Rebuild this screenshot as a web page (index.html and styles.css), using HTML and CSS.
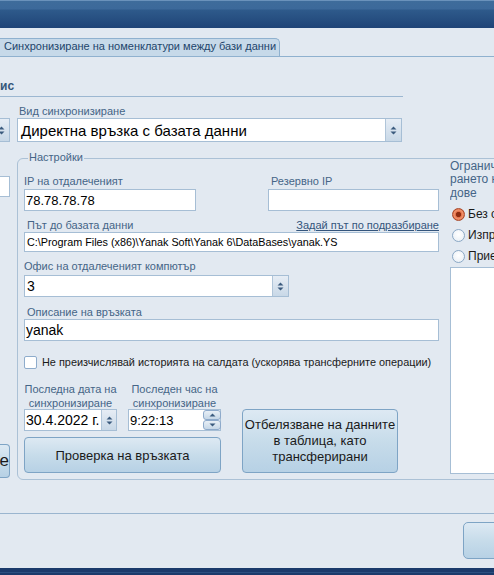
FILE: index.html
```html
<!DOCTYPE html>
<html lang="bg">
<head>
<meta charset="utf-8">
<title>Синхронизиране на номенклатури</title>
<link rel="stylesheet" href="styles.css">
</head>
<body>
<div class="topbar"></div>
<div class="tabstrip"><div class="tab">Синхронизиране на номенклатури между бази данни</div></div>
<div class="sechead">ис</div>
<div class="row">
  <div class="leftcol">
    <div class="lcombo"><span class="spin"><svg width="7" height="9" viewBox="0 0 7 9"><path d="M0.5 3.5H6.5L3.5 0.5Z M0.5 5.5H6.5L3.5 8.5Z" fill="#3b5b7e"/></svg></span></div>
    <div class="lbox"></div>
    <div class="lbtn"><span>те</span></div>
  </div>
  <div class="maincol">
    <div class="lbl lbl-vid">Вид синхронизиране</div>
    <div class="combo combo-vid"><span class="val big">Директна връзка с базата данни</span><span class="spin"><svg width="7" height="9" viewBox="0 0 7 9"><path d="M0.5 3.5H6.5L3.5 0.5Z M0.5 5.5H6.5L3.5 8.5Z" fill="#3b5b7e"/></svg></span></div>
    <div class="group">
      <div class="legend"><span>Настройки</span></div>
      <div class="gridwrap">
        <div class="leftarea">
          <div class="pair">
            <div class="c1"><div class="lbl">IP на отдалеченият</div><div class="input ipin"><span class="val">78.78.78.78</span></div></div>
            <div class="c2"><div class="lbl ind3">Резервно IP</div><div class="input ipin"></div></div>
          </div>
          <div class="pathlbl"><span class="lbl ind3">Път до базата данни</span><span class="link">Задай път по подразбиране</span></div>
          <div class="input path"><span class="val">C:\Program Files (x86)\Yanak Soft\Yanak 6\DataBases\yanak.YS</span></div>
          <div class="lbl office">Офис на отдалеченият компютър</div>
          <div class="combo combo-office"><span class="val mid">3</span><span class="spin"><svg width="7" height="9" viewBox="0 0 7 9"><path d="M0.5 3.5H6.5L3.5 0.5Z M0.5 5.5H6.5L3.5 8.5Z" fill="#3b5b7e"/></svg></span></div>
          <div class="lbl desc ind3">Описание на връзката</div>
          <div class="input descin"><span class="val">yanak</span></div>
          <div class="check"><span class="box"></span><span>Не преизчислявай историята на салдата (ускорява трансферните операции)</span></div>
          <div class="bottom">
            <div class="dt">
              <div class="dtgrid">
                <div class="dtcol">
                  <div class="lbl2">Последна дата на<br>синхронизиране</div>
                  <div class="input dtin"><span class="val">30.4.2022 г.</span><span class="spin dspin"><svg width="7" height="9" viewBox="0 0 7 9"><path d="M0.5 3.5H6.5L3.5 0.5Z M0.5 5.5H6.5L3.5 8.5Z" fill="#3b5b7e"/></svg></span></div>
                </div>
                <div class="dtcol">
                  <div class="lbl2">Последен час на<br>синхронизиране</div>
                  <div class="input dtin"><span class="val tval">9:22:13</span><span class="spin2"><span class="sb"><svg width="7" height="4" viewBox="0 0 7 4"><path d="M0.5 3.5H6.5L3.5 0.5Z" fill="#3b5b7e"/></svg></span><span class="sb"><svg width="7" height="4" viewBox="0 0 7 4"><path d="M0.5 0.5H6.5L3.5 3.5Z" fill="#3b5b7e"/></svg></span></span></div>
                </div>
              </div>
              <div class="btn btn-check">Проверка на връзката</div>
            </div>
            <div class="btn btn-mark">Отбелязване на данните<br>в таблица, като<br>трансферирани</div>
          </div>
        </div>
        <div class="rightpanel">
          <div class="rtitle">Ограничаване на трансфе<br>рането на номенклатури по ви<br>дове</div>
          <div class="radio r1"><span class="rb on"></span><span>Без ограничение</span></div>
          <div class="radio"><span class="rb"></span><span>Изпращане само на избраните</span></div>
          <div class="radio"><span class="rb"></span><span>Приемане само на избраните</span></div>
          <div class="listbox"></div>
        </div>
      </div>
    </div>
  </div>
</div>
<div class="footer"><div class="fbtn"></div></div>
<div class="bottombar"></div>
</body>
</html>
```
FILE: styles.css
```css
* { box-sizing: border-box; margin: 0; padding: 0; }
html, body { width: 494px; height: 575px; overflow: hidden; }
body {
  background: #e2e9f1;
  font-family: "Liberation Sans", Arial, sans-serif;
  font-size: 11px;
  color: #1a1a1a;
}

.topbar {
  height: 28px;
  background: linear-gradient(to bottom, #6a92bb 0, #6a92bb 1px, #3e6c9b 1px, #3c699a 9px, #2e5a8b 10px, #1f4477 100%);
}

.tabstrip {
  margin-top: 10px;
  height: 19px;
  border-bottom: 1px solid #8fb1cf;
}
.tab {
  width: 280px;
  height: 18px;
  padding-left: 4px;
  background: #c6d9e9;
  border: 1px solid #8fb1cf;
  border-left: 0;
  border-bottom: 0;
  border-radius: 0 5px 0 0;
  font-size: 11px;
  line-height: 15px;
  color: #22456b;
  white-space: nowrap;
  overflow: hidden;
}

.sechead {
  width: 403px;
  padding: 22px 0 3px 0;
  border-bottom: 1px solid #9cb7d1;
  font-size: 12px;
  line-height: 14px;
  font-weight: bold;
  color: #34567b;
}

.row { display: flex; align-items: flex-start; }

.leftcol {
  flex: none;
  width: 10px;
  overflow: hidden;
  display: flex;
  flex-direction: column;
}
.lcombo {
  margin-top: 21px;
  height: 24px;
  border: 1px solid #a6bed5;
  border-left: 0;
  display: flex;
  justify-content: flex-end;
  background: #fff;
}
.lcombo .spin { width: 15px; border-left: 0; }
.lbox {
  margin-top: 34px;
  height: 21px;
  background: #fff;
  border: 1px solid #a6bed5;
  border-left: 0;
}
.lbtn {
  margin-top: 247px;
  height: 34px;
  border: 1px solid #7ea4c5;
  border-left: 0;
  border-radius: 0 4px 4px 0;
  background: linear-gradient(#dde9f3, #c7dcea 50%, #b7d1e5);
  display: flex;
  align-items: center;
  justify-content: flex-end;
  font-size: 17px;
  overflow: hidden;
  white-space: nowrap;
}

.maincol { flex: none; width: 520px; margin-left: 7px; }

.lbl {
  font-size: 11px;
  line-height: 13px;
  color: #456587;
  white-space: nowrap;
}
.lbl-vid { margin-top: 8px; padding-left: 2px; }
.ind3 { padding-left: 3px; }

.combo {
  display: flex;
  align-items: stretch;
  background: #fff;
  border: 1px solid #a6bed5;
}
.combo-vid { width: 385px; height: 24px; }
.val {
  flex: 1;
  display: flex;
  align-items: center;
  padding-left: 1px;
  white-space: nowrap;
  overflow: hidden;
  color: #000;
}
.combo-vid .val { padding-left: 3px; }
.big { font-size: 15px; }
.mid { font-size: 14px; }

.spin {
  flex: none;
  width: 16px;
  display: flex;
  align-items: center;
  justify-content: center;
  background: linear-gradient(#e6edf5, #c8d8e7);
  border-left: 1px solid #b0c5d9;
}

.group {
  margin-top: 16px;
  width: 520px;
  border: 1px solid #abc1d6;
  border-radius: 6px;
  padding-bottom: 5px;
}
.legend {
  height: 13px;
  margin: -8px 0 -5px 10px;
  font-size: 11px;
  line-height: 13px;
  color: #456587;
}
.legend span { background: #e2e9f1; padding: 0 1px; }

.gridwrap {
  display: grid;
  grid-template-columns: 415px 1fr;
  column-gap: 11px;
  padding-left: 6px;
}

.leftarea { padding-top: 16px; }
.pair { display: flex; gap: 72px; }
.c1 { width: 172px; }
.c2 { width: 171px; }

.input {
  background: #fff;
  border: 1px solid #a6bed5;
  display: flex;
  align-items: stretch;
}
.ipin { margin-top: 1px; height: 22px; font-size: 13px; }

.pathlbl {
  margin-top: 8px;
  height: 13px;
  display: flex;
  justify-content: space-between;
}
.link {
  font-size: 11px;
  line-height: 13px;
  color: #34557c;
  text-decoration: underline;
  white-space: nowrap;
}
.path { height: 20px; font-size: 10.8px; }
.path .val { padding-left: 2px; }

.office { margin-top: 8px; }
.combo-office { margin-top: 2px; width: 265px; height: 22px; }
.combo-office .val { padding-left: 2px; }

.desc { margin-top: 9px; }
.descin { height: 22px; font-size: 14px; }

.check {
  margin-top: 15px;
  height: 13px;
  display: flex;
  align-items: center;
  gap: 5px;
  line-height: 13px;
  font-size: 10.9px;
  white-space: nowrap;
  color: #1a1a1a;
}
.box {
  flex: none;
  width: 13px;
  height: 13px;
  background: #fff;
  border: 1px solid #8eaccc;
  border-radius: 2px;
}

.bottom {
  margin-top: 14px;
  display: flex;
  gap: 21px;
  align-items: flex-start;
}
.dt { width: 197px; }
.dtgrid {
  display: grid;
  grid-template-columns: 93px 93px;
  column-gap: 11px;
}
.lbl2 {
  font-size: 11px;
  line-height: 13.5px;
  text-align: center;
  color: #456587;
  white-space: nowrap;
}
.dtin { margin-top: -1px; height: 22px; font-size: 14px; }
.tval { font-size: 13px; }
.dspin { width: 15px; }
.spin2 {
  flex: none;
  width: 18px;
  margin-right: -1px;
  display: flex;
  flex-direction: column;
}
.sb {
  flex: 1;
  display: flex;
  align-items: center;
  justify-content: center;
  border: 1px solid #8eaacb;
  border-radius: 3px;
  background: linear-gradient(#e8eff6, #c6d7e7);
}

.btn {
  display: flex;
  align-items: center;
  justify-content: center;
  text-align: center;
  border: 1px solid #7ea4c5;
  border-radius: 4px;
  background: linear-gradient(#dde9f3, #c7dcea 50%, #b7d1e5);
  color: #1a1a1a;
}
.btn-check { margin-top: 6px; height: 36px; font-size: 13px; }
.btn-mark {
  flex: none;
  margin-top: 26px;
  width: 156px;
  height: 64px;
  font-size: 13px;
  line-height: 16px;
}

.rightpanel {
  padding-top: 1px;
  white-space: nowrap;
  overflow: hidden;
}
.rtitle {
  font-size: 12px;
  line-height: 13.33px;
  color: #456587;
}
.radio {
  height: 21px;
  display: flex;
  align-items: center;
  gap: 3px;
  padding-left: 2px;
  font-size: 12px;
  color: #1a1a1a;
}
.r1 { margin-top: 4px; }
.rb {
  flex: none;
  width: 13px;
  height: 13px;
  border-radius: 50%;
  border: 1px solid #8ba8c5;
  background: radial-gradient(circle at 50% 40%, #ffffff, #e6edf4);
}
.rb.on {
  border-color: #a9482a;
  background: radial-gradient(circle, #8e2c10 0, #8e2c10 2.2px, #e4714a 3px, #f09670 4.5px, #d7623b 6px);
}
.listbox {
  height: 207px;
  background: #fff;
  border: 1px solid #a6bed5;
}

.footer {
  margin-top: 33px;
  border-top: 1px solid #9ab5cf;
  height: 55px;
  padding-top: 8px;
}
.fbtn {
  margin-left: 463px;
  width: 60px;
  height: 37px;
  border: 1px solid #7ea4c5;
  border-radius: 5px;
  background: linear-gradient(#dde9f3, #c7dcea 50%, #b7d1e5);
}

.bottombar {
  height: 7px;
  background: linear-gradient(#1b3a6b 0, #1b3a6b 4px, #2b4f80 4px, #2b4f80 5px, #1b3a6b 5px);
}
```
